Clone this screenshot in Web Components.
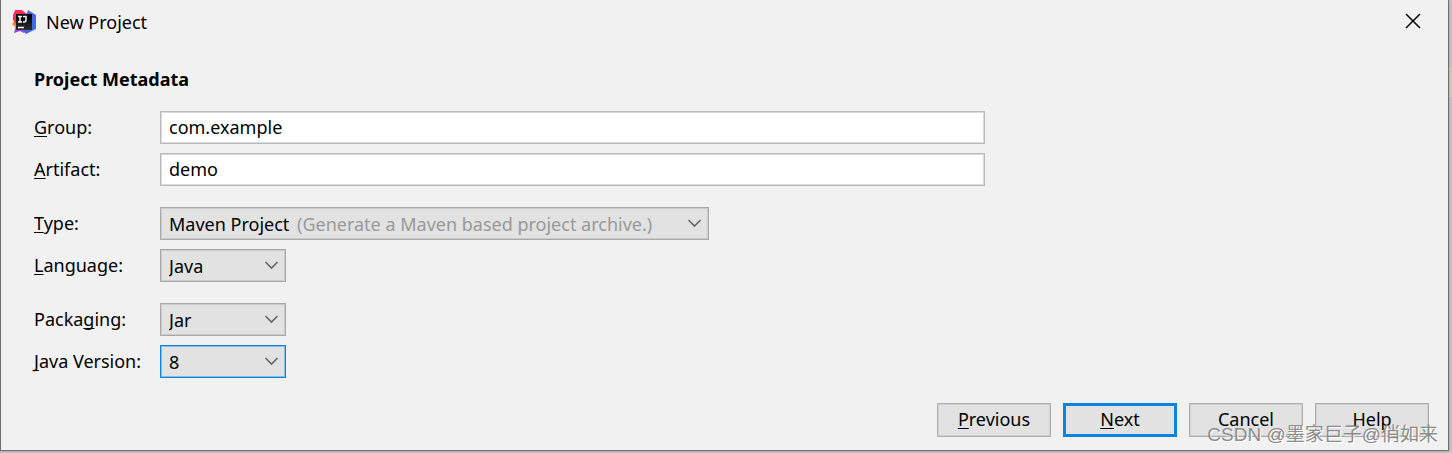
<!DOCTYPE html>
<html lang="en">
<head>
<meta charset="utf-8">
<title>New Project</title>
<style>
html, body { height: 100%; }
body { margin: 0; background: linear-gradient(#d9d3bf, #d9d3bf) right 67px / 3px 30px no-repeat #c9c9c9; color: #000; font: 18px/24px "Noto Sans", "Noto Sans CJK SC", sans-serif; }
</style>
</head>
<body>
<project-dialog>
  <dialog-title slot="title">New Project</dialog-title>
  <field-group>
    <text-field label="_Group:" value="com.example"></text-field>
    <text-field label="_Artifact:" value="demo"></text-field>
  </field-group>
  <field-group>
    <choice-field label="_Type:" options="Maven Project" hint="(Generate a Maven based project archive.)" wide></choice-field>
    <choice-field label="_Language:" options="Java"></choice-field>
  </field-group>
  <field-group>
    <choice-field label="Packa_ging:" options="Jar"></choice-field>
    <choice-field label="_Java Version:" options="8" active></choice-field>
  </field-group>
  <dialog-button slot="actions" label="_Previous"></dialog-button>
  <dialog-button slot="actions" label="_Next" primary></dialog-button>
  <dialog-button slot="actions" label="Cancel"></dialog-button>
  <dialog-button slot="actions" label="Help"></dialog-button>
</project-dialog>
<water-mark>CSDN @墨家巨子@俏如来</water-mark>

<script>
// An underscore in a label marks the following letter as its keyboard mnemonic.
const mnemonic = text => text.replace(/_(.)/, '<u>$1</u>');
const underline = `u { text-decoration: underline 1px; text-underline-offset: 2px; text-decoration-skip-ink: none; }`;
const row = `
  :host { display: grid; grid-template-columns: 126px minmax(0, 1fr); align-items: center; }
  label { padding-bottom: 2px; white-space: nowrap; }
  ${underline}`;

customElements.define('project-dialog', class extends HTMLElement {
  constructor() {
    super();
    this.attachShadow({ mode: 'open' }).innerHTML = `
      <style>
        :host { display: flex; flex-direction: column; box-sizing: border-box; min-height: calc(100% - 2px); margin-right: 3px;
          background: #f1f1f1; border: 1px solid #6f6f6f; border-top: 0; box-shadow: 0 0 4px #999; }
        main { padding: 0 24px 0 33px; }
        h1 { margin: 24px 0 20px; font-size: 18px; line-height: 24px; font-weight: 700; }
        .fields { display: grid; gap: 21px; max-width: 951px; }
        footer { display: flex; justify-content: flex-end; gap: 12px; margin-top: auto; padding: 24px 19px 13px; }
      </style>
      <slot name="title"></slot>
      <main><h1>Project Metadata</h1><div class="fields"><slot></slot></div></main>
      <footer><slot name="actions"></slot></footer>`;
  }
});

customElements.define('dialog-title', class extends HTMLElement {
  constructor() {
    super();
    this.attachShadow({ mode: 'open' }).innerHTML = `
      <style>
        :host { display: flex; align-items: center; gap: 10px; height: 43px; padding: 0 27px 0 11px; }
        .name { flex: 1; }
        svg { display: block; }
        button { padding: 0 0 2px; border: 0; background: none; color: #000; }
      </style>
      <svg width="24" height="24" viewBox="0 0 24 24" aria-hidden="true">
        <defs>
          <linearGradient id="a" x1="0" y1="0" x2="1" y2="1"><stop offset="0" stop-color="#ff3468"/><stop offset=".6" stop-color="#f52361"/><stop offset="1" stop-color="#8b3be0"/></linearGradient>
          <linearGradient id="b" x1="0" y1="0" x2="1" y2="1"><stop offset="0" stop-color="#6a74e0"/><stop offset=".5" stop-color="#4f63d8"/><stop offset="1" stop-color="#1f7df2"/></linearGradient>
          <linearGradient id="c" x1="0" y1="1" x2="1" y2="0"><stop offset="0" stop-color="#ad35e2"/><stop offset="1" stop-color="#5966e8"/></linearGradient>
          <linearGradient id="d" x1="0" y1="0" x2="0" y2="1"><stop offset="0" stop-color="#000"/><stop offset="1" stop-color="#2c2c32"/></linearGradient>
        </defs>
        <path d="M3 10L0 14l4 4 3-4z" fill="#ff8a1c"/>
        <path d="M3 0h7l6 5-5 9H4L1 10V5z" fill="url(#a)"/>
        <path d="M4 16l-2 7 6-2 4 2 5-5V5z" fill="url(#c)"/>
        <path d="M16 0l8 5v14l-10 5-3-4 3-15z" fill="url(#b)"/>
        <rect x="4" y="4" width="16" height="16" fill="url(#d)"/>
        <path d="M6 6.500h4M8 6v6.500M6 12h4M11 6.500h3v3.500q0 2-2 2h-1M6 17.500h6" fill="none" stroke="#fff" stroke-width="1.4"/>
      </svg>
      <span class="name"><slot></slot></span>
      <button type="button" aria-label="Close"><svg width="16" height="16" viewBox="0 0 16 16"><path d="M1 1l14 14M15 1L1 15" stroke="currentColor" stroke-width="1.5"/></svg></button>`;
  }
});

customElements.define('field-group', class extends HTMLElement {
  constructor() {
    super();
    this.attachShadow({ mode: 'open' }).innerHTML = `
      <style>:host { display: grid; gap: 9px; }</style><slot></slot>`;
  }
});

customElements.define('text-field', class extends HTMLElement {
  connectedCallback() {
    this.attachShadow({ mode: 'open' }).innerHTML = `
      <style>
        ${row}
        input { box-sizing: border-box; width: 100%; height: 33px; padding: 0 8px 2px; border: 1px solid #b9b9b9; outline: 0;
          box-shadow: inset 0 0 0 1px #dadada; border-radius: 0; background: #fff; color: inherit; font: inherit; }
      </style>
      <label for="field">${mnemonic(this.getAttribute('label'))}</label>
      <input id="field" type="text" value="${this.getAttribute('value')}">`;
  }
});

customElements.define('choice-field', class extends HTMLElement {
  connectedCallback() {
    const options = this.getAttribute('options').split('|').map(o => `<option>${o}</option>`).join('');
    const hint = this.getAttribute('hint');
    this.attachShadow({ mode: 'open' }).innerHTML = `
      <style>
        ${row}
        .box { position: relative; width: 126px; max-width: 100%; }
        :host([wide]) .box { width: 549px; }
        select { appearance: none; display: block; box-sizing: border-box; width: 100%; height: 33px; padding: 0 32px 0 8px; outline: 0;
          border: 1px solid #a9a9a9; box-shadow: inset 0 0 0 1px #cbcbcb; border-radius: 0; background: #e2e2e2; color: inherit; font: inherit; }
        :host([active]) select { border-color: #0a84de; box-shadow: inset 0 0 0 1px #86bde6; }
        .hint { position: absolute; left: 137px; top: 5px; color: #999; white-space: nowrap; pointer-events: none; }
        svg { position: absolute; right: 7px; top: 11px; pointer-events: none; }
      </style>
      <label for="field">${mnemonic(this.getAttribute('label'))}</label>
      <div class="box">
        <select id="field">${options}</select>
        ${hint ? `<span class="hint">${hint}</span>` : ''}
        <svg width="15" height="11" viewBox="0 0 15 11" aria-hidden="true"><path d="M1.500 2l6 6 6-6" fill="none" stroke="#666" stroke-width="1.6"/></svg>
      </div>`;
  }
});

customElements.define('dialog-button', class extends HTMLElement {
  connectedCallback() {
    this.attachShadow({ mode: 'open' }).innerHTML = `
      <style>
        :host { display: block; width: 114px; }
        ${underline}
        button { box-sizing: border-box; width: 100%; height: 34px; padding: 0 0 2px; border: 1px solid #adadad; border-radius: 0;
          box-shadow: inset 0 0 0 1px #d0d0d0; background: #e2e2e2; color: inherit; font: inherit; line-height: 24px; }
        :host([primary]) button { border: 3px solid #0a84de; box-shadow: none; }
      </style>
      <button type="button">${mnemonic(this.getAttribute('label'))}</button>`;
  }
});

customElements.define('water-mark', class extends HTMLElement {
  constructor() {
    super();
    this.attachShadow({ mode: 'open' }).innerHTML = `
      <style>
        :host { position: absolute; right: 14px; bottom: 5px; font: 19px/26px "Liberation Sans", "Noto Sans CJK SC", sans-serif;
          color: #8c8c8c; text-shadow: 1px 1px 0 #fff; white-space: nowrap; pointer-events: none; }
      </style><slot></slot>`;
  }
});
</script>
</body>
</html>
